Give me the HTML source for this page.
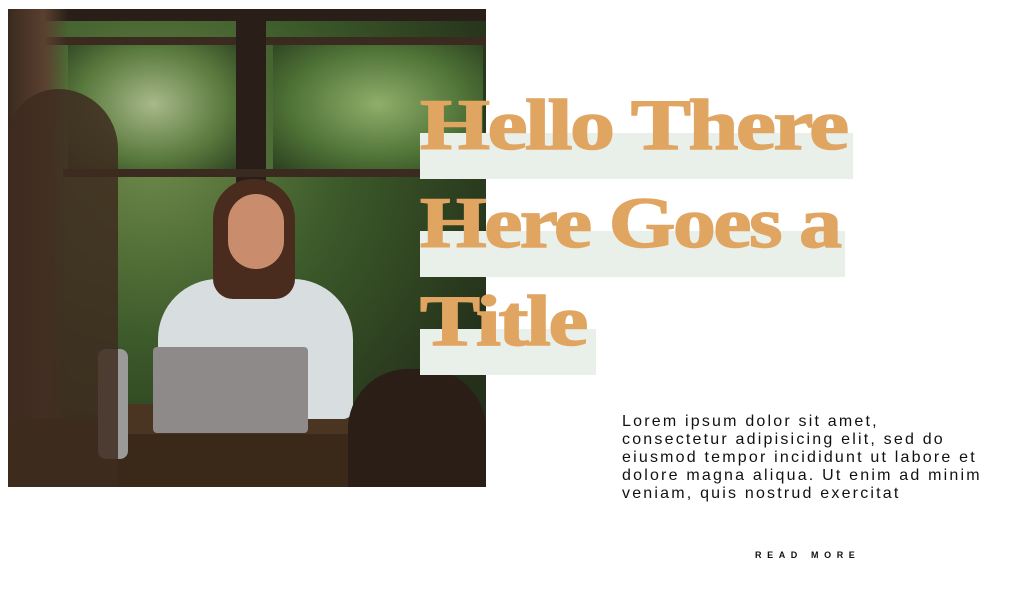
<!DOCTYPE html>
<html><head><style>
html,body{margin:0;padding:0;background:#fff;width:1034px;height:600px;overflow:hidden;position:relative;font-family:"Liberation Sans",sans-serif}
.photo{position:absolute;left:8px;top:9px;width:478px;height:478px;overflow:hidden;background:#2b2a1e}
.photo div{position:absolute}
.bar{position:absolute;left:420px;background:#e9efe9}
.t{position:absolute;left:420px;font-family:"Liberation Serif",serif;font-weight:bold;font-size:72px;color:#e1a562;line-height:1;white-space:nowrap;letter-spacing:-2px;transform-origin:left top;transform:scaleX(1.25);-webkit-text-stroke:1.5px #e1a562}
.p{position:absolute;left:622px;top:413px;font-size:16px;line-height:18px;color:#111;letter-spacing:2.2px;width:420px;white-space:nowrap}
.rm{position:absolute;left:755px;top:550px;font-size:9px;font-weight:bold;letter-spacing:5.6px;color:#111}
</style></head><body>
<div class="photo">
  <div style="left:0;top:0;width:478px;height:478px;background:radial-gradient(ellipse at 30% 30%,#6f8a4a 0%,#3c5a2a 40%,#24301a 80%)"></div>
  <div style="left:60px;top:30px;width:170px;height:130px;background:radial-gradient(ellipse,#a8b88a,#5a7a3e 60%,#2f4422)"></div>
  <div style="left:265px;top:30px;width:210px;height:130px;background:radial-gradient(ellipse,#8fae6a,#4e7236 60%,#2c4020)"></div>
  <div style="left:0;top:0;width:478px;height:12px;background:#2a1f18"></div>
  <div style="left:0;top:28px;width:478px;height:8px;background:#3a2a20"></div>
  <div style="left:228px;top:0;width:30px;height:330px;background:#2a1f18"></div>
  <div style="left:55px;top:160px;width:420px;height:8px;background:#3a2a20"></div>
  <div style="left:0;top:0;width:60px;height:478px;background:linear-gradient(90deg,#3a2a1e,#5a4030 60%,rgba(60,40,30,0))"></div>
  <div style="left:0;top:410px;width:478px;height:68px;background:#3a2818"></div>
  <div style="left:120px;top:395px;width:240px;height:30px;background:#4a3422"></div>
  <div style="left:150px;top:270px;width:195px;height:140px;background:#d8dde0;border-radius:60px 60px 10px 10px"></div>
  <div style="left:205px;top:170px;width:82px;height:120px;background:#4a2c1e;border-radius:40px 40px 20px 20px"></div>
  <div style="left:220px;top:185px;width:56px;height:75px;background:#c98d6e;border-radius:28px"></div>
  <div style="left:145px;top:338px;width:155px;height:86px;background:#8e8a8a;border-radius:4px"></div>
  <div style="left:90px;top:340px;width:30px;height:110px;background:#9a9a98;border-radius:8px"></div>
  <div style="left:340px;top:360px;width:138px;height:118px;background:#2a1e16;border-radius:60px 60px 0 0"></div>
  <div style="left:0;top:80px;width:110px;height:398px;background:#3e2c20;border-radius:50px 60px 0 0;opacity:.85"></div>
</div>
<div class="bar" style="top:133px;width:433px;height:46px"></div>
<div class="bar" style="top:231px;width:425px;height:46px"></div>
<div class="bar" style="top:329px;width:176px;height:46px"></div>
<div class="t" style="top:89px">Hello There</div>
<div class="t" style="top:187px;transform:scaleX(1.19)">Here Goes a</div>
<div class="t" style="top:285px">Title</div>
<div class="p">Lorem ipsum dolor sit amet,<br>consectetur adipisicing elit, sed do<br>eiusmod tempor incididunt ut labore et<br>dolore magna aliqua. Ut enim ad minim<br>veniam, quis nostrud exercitat</div>
<div class="rm">READ MORE</div>
</body></html>
